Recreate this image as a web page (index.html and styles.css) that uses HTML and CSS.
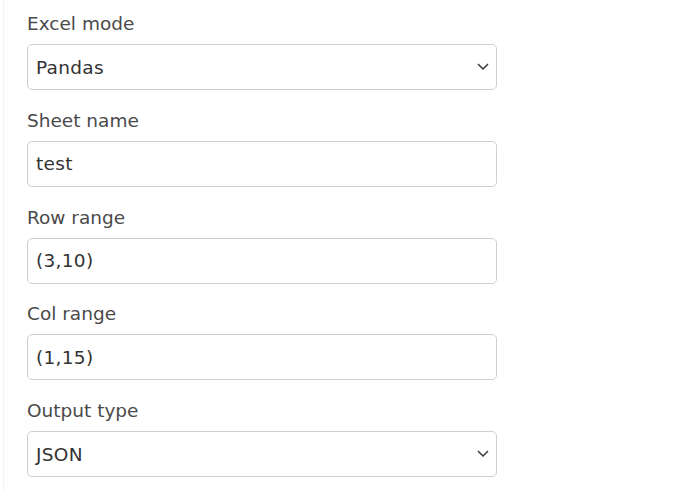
FILE: index.html
```html
<!DOCTYPE html>
<html>
<head>
<meta charset="utf-8">
<link rel="stylesheet" href="styles.css">
</head>
<body>
<div class="panel">
  <div class="field">
    <div class="label">Excel mode</div>
    <div class="control select"><span>Pandas</span>
      <svg class="chev" width="12" height="8" viewBox="0 0 12 8"><path d="M1.5 1.5 L6 6 L10.5 1.5" fill="none" stroke="#444" stroke-width="1.7" stroke-linecap="round" stroke-linejoin="round"/></svg>
    </div>
  </div>
  <div class="field">
    <div class="label">Sheet name</div>
    <div class="control"><span>test</span></div>
  </div>
  <div class="field">
    <div class="label">Row range</div>
    <div class="control"><span>(3,10)</span></div>
  </div>
  <div class="field">
    <div class="label">Col range</div>
    <div class="control"><span>(1,15)</span></div>
  </div>
  <div class="field">
    <div class="label">Output type</div>
    <div class="control select"><span>JSON</span>
      <svg class="chev" width="12" height="8" viewBox="0 0 12 8"><path d="M1.5 1.5 L6 6 L10.5 1.5" fill="none" stroke="#444" stroke-width="1.7" stroke-linecap="round" stroke-linejoin="round"/></svg>
    </div>
  </div>
</div>
</body>
</html>
```
FILE: styles.css
```css
html, body {
  margin: 0;
  padding: 0;
  background: #fff;
}
body {
  font-family: "DejaVu Sans", "Open Sans", sans-serif;
  color: #444;
}
.panel {
  margin-left: 3px;
  border-left: 1px dotted #ececec;
  padding: 10px 0 0 23px;
  min-height: 493px;
  box-sizing: border-box;
  display: flex;
  flex-direction: column;
  gap: 16.75px;
}
.field {
  display: flex;
  flex-direction: column;
  gap: 7px;
}
.label {
  font-size: 18.5px;
  line-height: 27px;
  color: #4a4a4a;
}
.control {
  width: 470px;
  height: 46px;
  box-sizing: border-box;
  border: 1px solid #cfcfcf;
  border-radius: 5px;
  display: flex;
  align-items: center;
  justify-content: space-between;
  padding: 0 7px 0 8px;
  font-size: 18.5px;
  letter-spacing: 0.3px;
  color: #333;
}
.chev {
  display: block;
}
```
